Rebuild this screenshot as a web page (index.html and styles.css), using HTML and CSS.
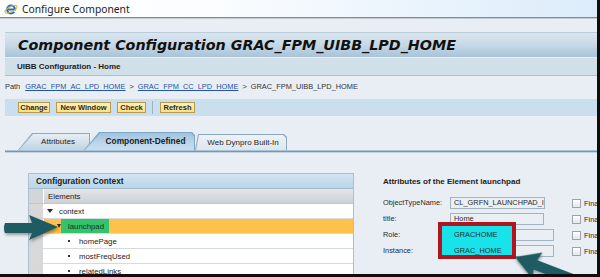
FILE: index.html
```html
<!doctype html>
<html>
<head>
<meta charset="utf-8">
<title>Configure Component</title>
<link rel="stylesheet" href="styles.css">
</head>
<body>
<div class="win">
	<div class="titlebar">
		<svg class="ie" width="14" height="14" viewBox="0 0 14 14">
			<path d="M10.3 9.8 A4 4 0 1 1 11 7.5 L3.2 7.5" fill="none" stroke="#1a6fd6" stroke-width="2"/>
			<ellipse cx="7" cy="7.3" rx="6.6" ry="2.6" transform="rotate(-28 7 7.3)" fill="none" stroke="#f0b21c" stroke-width="1.1"/>
		</svg>
		<span>Configure Component</span>
	</div>
	<div class="main">
		<div class="head">
			<h1>Component Configuration GRAC_FPM_UIBB_LPD_HOME</h1>
			<div class="sub">UIBB Configuration - Home</div>
		</div>
		<div class="path">
			<span class="lbl">Path</span>
			<a href="#">GRAC_FPM_AC_LPD_HOME</a>
			<span>&gt;</span>
			<a href="#">GRAC_FPM_CC_LPD_HOME</a>
			<span>&gt;</span>
			<span>GRAC_FPM_UIBB_LPD_HOME</span>
		</div>
		<div class="toolbar">
			<span class="btn w-change">Change</span>
			<span class="btn w-new">New Window</span>
			<span class="btn w-check">Check</span>
			<span class="sep"></span>
			<span class="btn w-refresh">Refresh</span>
		</div>
		<div class="tabs">
			<div class="tab tab-attr"><span>Attributes</span></div>
			<div class="tab tab-comp"><span>Component-Defined</span></div>
			<div class="tab tab-wd"><span>Web Dynpro Built-In</span></div>
		</div>
		<div class="tabline"></div>
		<div class="panels">
			<div class="ctx">
				<div class="ctx-head">Configuration Context</div>
				<div class="ctx-row cols"><span class="sel"></span><span class="cell">Elements</span></div>
				<div class="ctx-row"><span class="sel"></span><span class="cell lv0"><i class="tri"></i>context</span></div>
				<div class="ctx-row on"><span class="sel"></span><span class="cell lv1"><i class="tri"></i><b class="hl">launchpad</b></span></div>
				<div class="ctx-row"><span class="sel"></span><span class="cell lv2"><i class="dot"></i>homePage</span></div>
				<div class="ctx-row"><span class="sel"></span><span class="cell lv2"><i class="dot"></i>mostFreqUsed</span></div>
				<div class="ctx-row"><span class="sel"></span><span class="cell lv2"><i class="dot"></i>relatedLinks</span></div>
			</div>
			<div class="attrs">
				<h2>Attributes of the Element launchpad</h2>
				<div class="form">
					<span class="lab">ObjectTypeName:</span>
					<span class="inp w95"><span class="val">CL_GRFN_LAUNCHPAD_I</span></span>
					<span class="fin"><i class="chk"></i>Final</span>
					<span class="lab">title:</span>
					<span class="inp w94"><span class="val">Home</span></span>
					<span class="fin"><i class="chk"></i>Final</span>
					<span class="lab">Role:</span>
					<span class="inp w104"><span class="val">GRACHOME</span></span>
					<span class="fin"><i class="chk"></i>Final</span>
					<span class="lab">Instance:</span>
					<span class="inp w104"><span class="val">GRAC_HOME</span></span>
					<span class="fin"><i class="chk"></i>Final</span>
				</div>
			</div>
		</div>
	</div>
	<div class="mark"></div>
	<svg class="arrows" width="597" height="274" viewBox="0 0 597 274">
		<g class="arrow" transform="translate(4,228)">
			<path d="M1,-5 L28,-5 L25,-13 L54,-1 L25,12 L28,5 L1,5 Q-1,0 1,-5 Z"/>
		</g>
		<g class="arrow" transform="translate(515,257) rotate(21)">
			<path d="M0,0 L24,-14 L22,-5 L100,-5 L100,5 L22,5 L24,14 Z"/>
		</g>
	</svg>
</div>
</body>
</html>
```
FILE: styles.css
```css
*{margin: 0; padding: 0;}
body{margin: 0; font-family: "Liberation Sans", Arial, sans-serif; color: #222; background: #e8eef3;}
i,b{font-style: normal;}

.win{
	position: relative;
	width: 600px;
	height: 277px;
	box-sizing: border-box;
	border-right: 3px solid #0e0e0e;
	border-bottom: 3px solid #0e0e0e;
	overflow: hidden;
	background: #e8eef3;
}
.titlebar{
	height: 17px;
	display: flex;
	align-items: center;
	padding-left: 4px;
	background: linear-gradient(to right, #fff 0%, #fbfdff 35%, #dcecfa 100%);
	border-bottom: 1px solid #8a8a8a;
	box-shadow: 0 1px 0 #c5cbd0;
	font-family: "Noto Sans", "Open Sans", sans-serif;
	font-size: 10.3px;
	color: #1b1b1b;
}
.titlebar .ie{margin-right: 4px;}

.main{padding: 14px 0 0 5px;}

.head{border-top: 1px solid #b8ccda;}
.head h1{
	height: 24px;
	padding-left: 13px;
	font: italic bold 14.3px "DejaVu Sans", Verdana, sans-serif;
	line-height: 25px;
	color: #111;
	background: linear-gradient(#dbe6ee, #c6d8e6 50%, #a9c3d8);
	border-bottom: 1px solid #e6eef4;
}
.sub{
	height: 17px;
	line-height: 17px;
	padding-left: 12px;
	font-size: 8px;
	font-weight: bold;
	background: #d1dfe9;
	border-bottom: 1px solid #adbfcd;
}

.path{
	height: 21px;
	display: flex;
	align-items: center;
	gap: 4px;
	font-size: 7.4px;
	color: #333;
}
.path .lbl{margin-right: 1px;}
.path a{color: #2553a8; text-decoration: underline;}

.toolbar{
	margin-top: 2px;
	height: 17px;
	display: flex;
	align-items: center;
	gap: 6px;
	padding-left: 13px;
	background: #cadfee;
}
.btn{
	height: 11px;
	box-sizing: border-box;
	line-height: 9px;
	text-align: center;
	font-size: 7.5px;
	font-weight: bold;
	color: #2a2a2a;
	border: 1px solid #b8994e;
	background: linear-gradient(#fdf1b8, #f8e189);
}
.w-change{width: 32px;}
.w-new{width: 55px;}
.w-check{width: 29px;}
.w-refresh{width: 35px;}
.sep{width: 1px; height: 13px; background: #9ab3c7; margin-right: 1px;}

.tabs{
	margin-top: 16px;
	height: 18px;
	display: flex;
	align-items: flex-end;
	padding-left: 13px;
}
.tab{
	position: relative;
	display: flex;
	align-items: center;
	justify-content: center;
	font-size: 8px;
	color: #222;
	background: #8eabc1;
}
.tab::before{
	content: "";
	position: absolute;
	left: 1px;
	right: 1px;
	top: 1px;
	bottom: 0;
	clip-path: inherit;
	background: linear-gradient(#e6eef4, #c0d4e4);
}
.tab span{position: relative;}
.tab-attr{
	width: 72px;
	height: 17px;
	padding-left: 8px;
	box-sizing: border-box;
	clip-path: polygon(0 100%, 14px 0, 100% 0, 100% 100%);
}
.tab-comp{
	width: 111px;
	height: 18px;
	margin-left: -6px;
	padding-left: 12px;
	box-sizing: border-box;
	font-size: 8.4px;
	font-weight: bold;
	z-index: 2;
	background: #7fa6c4;
	clip-path: polygon(0 100%, 15px 0, calc(100% - 3px) 0, 100% 3px, 100% 100%);
}
.tab-comp::before{background: linear-gradient(#9ec4e0, #bcd6ea 60%, #c9def0);}
.tab-wd{
	width: 92px;
	height: 16px;
	padding-left: 4px;
	box-sizing: border-box;
	clip-path: polygon(0 100%, 3px 0, calc(100% - 3px) 0, 100% 3px, 100% 100%);
}
.tab-wd::before{background: linear-gradient(#eef3f7, #dce7ef);}
.tabline{
	height: 3px;
	background: linear-gradient(#a6c3d9 0, #a6c3d9 1px, #7898b2 1px, #7898b2 2px, #c4d3df 2px);
}

.panels{
	display: flex;
	gap: 29px;
	margin-top: 20px;
	padding-left: 23px;
}
.ctx{
	width: 326px;
	flex: none;
	box-sizing: border-box;
	border: 1px solid #a8c0d2;
	border-bottom: 0;
	background: #fff;
	font-size: 7.8px;
}
.ctx-head{
	height: 14px;
	line-height: 14px;
	padding-left: 7px;
	font-size: 8.3px;
	font-weight: bold;
	background: linear-gradient(#d3e5f1, #bad5e9);
	border-bottom: 1px solid #a3bcd0;
}
.ctx-row{
	display: flex;
	height: 14px;
	border-bottom: 1px solid #d5dade;
}
.ctx-row .sel{
	width: 14px;
	background: #d8d8d8;
	border-right: 1px solid #fff;
}
.ctx-row .cell{
	flex: 1;
	display: flex;
	align-items: center;
}
.cols{background: linear-gradient(#e4e6e8, #cdd1d5); border-bottom-color: #c3c8cc;}
.cols .sel{background: #d3d6d9;}
.cols .cell{padding-left: 4px;}
.on{background: #fec14b;}
.lv0{padding-left: 3px;}
.lv1{padding-left: 13px;}
.lv2{padding-left: 24px;}
.tri{
	width: 0;
	height: 0;
	border-left: 3px solid transparent;
	border-right: 3px solid transparent;
	border-top: 4px solid #2b2b2b;
	margin-right: 6px;
}
.lv1 .tri{margin-right: 0; border-left-width: 2.5px; border-right-width: 2.5px;}
.hl{
	align-self: stretch;
	width: 48px;
	box-sizing: border-box;
	padding-left: 7px;
	display: flex;
	align-items: center;
	font-weight: normal;
	background: #34c26c;
	color: #1e2a20;
}
.dot{width: 2px; height: 2px; background: #333; margin-right: 9px;}

.attrs{padding-top: 4px; font-size: 7.4px; color: #2b2b2b;}
.attrs h2{height: 10px; line-height: 10px; font-size: 8px; font-weight: bold; color: #222;}
.form{
	margin-top: 10px;
	display: grid;
	grid-template-columns: 67px 122px auto;
	grid-auto-rows: 12px;
	row-gap: 4px;
	align-items: center;
}
.lab{line-height: 12px;}
.inp{
	height: 12px;
	box-sizing: border-box;
	padding-left: 3px;
	line-height: 10px;
	border: 1px solid #a2b3c1;
	background: #eaeff3;
	white-space: nowrap;
	overflow: hidden;
}
.w95{width: 95px;}
.w94{width: 94px;}
.w104{width: 104px;}
.val{position: relative; z-index: 2;}
.fin{display: flex; align-items: center; white-space: nowrap;}
.chk{
	width: 9px;
	height: 9px;
	box-sizing: border-box;
	border: 1px solid #97a5b0;
	background: linear-gradient(#fff, #e2e7eb);
	margin-right: 3px;
}

.mark{
	position: absolute;
	left: 438px;
	top: 222px;
	width: 78px;
	height: 37px;
	box-sizing: border-box;
	border: 4px solid #b1151e;
	background: #16e4ea;
	z-index: 1;
}
.arrows{
	position: absolute;
	left: 0;
	top: 0;
	z-index: 3;
	overflow: visible;
	pointer-events: none;
}
.arrow path{
	fill: #1f5b63;
	filter: drop-shadow(1px 2px 1.5px rgba(0,0,0,0.35));
}
```
